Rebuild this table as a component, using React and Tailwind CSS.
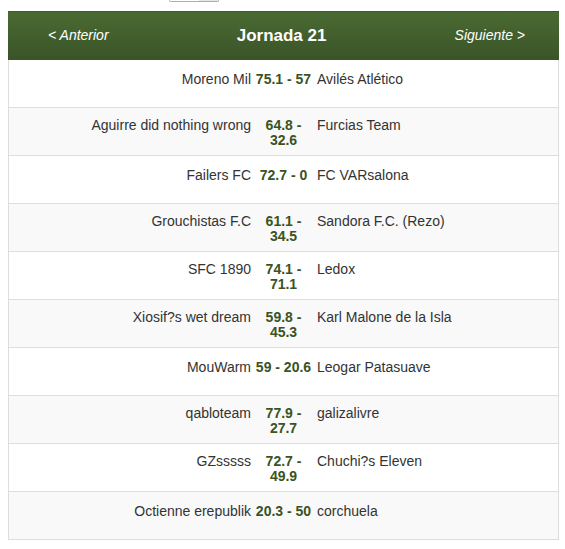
import React from "react";

const rows = [
  { h: "Moreno Mil", s: ["75.1 - 57"], a: "Avilés Atlético" },
  { h: "Aguirre did nothing wrong", s: ["64.8 -", "32.6"], a: "Furcias Team" },
  { h: "Failers FC", s: ["72.7 - 0"], a: "FC VARsalona" },
  { h: "Grouchistas F.C", s: ["61.1 -", "34.5"], a: "Sandora F.C. (Rezo)" },
  { h: "SFC 1890", s: ["74.1 -", "71.1"], a: "Ledox" },
  { h: "Xiosif?s wet dream", s: ["59.8 -", "45.3"], a: "Karl Malone de la Isla" },
  { h: "MouWarm", s: ["59 - 20.6"], a: "Leogar Patasuave" },
  { h: "qabloteam", s: ["77.9 -", "27.7"], a: "galizalivre" },
  { h: "GZsssss", s: ["72.7 -", "49.9"], a: "Chuchi?s Eleven" },
  { h: "Octienne erepublik", s: ["20.3 - 50"], a: "corchuela" },
];

export default function App() {
  return (
    <div className="w-[565px] h-[549px] bg-white font-['Liberation_Sans',Arial,sans-serif] text-[14px] text-[#333]">
      <div className="h-[11px]">
        <div className="ml-[169px] w-[50px] h-[2px] flex border-x border-b border-[#adadad] rounded-b-[3px] overflow-hidden">
          <div className="w-[29px] bg-white" />
          <div className="flex-1 bg-[#e6e6e6]" />
        </div>
      </div>
      <div className="ml-[8px] w-[551px]">
        <div className="h-[49px] flex items-center pl-[40px] pr-[34px] bg-linear-to-b from-[#4a6a32] to-[#3a5428] text-white border-t border-[#3d5a2a]">
          <span className="italic text-[14px] pb-[2px]">&lt; Anterior</span>
          <span className="flex-1 text-center font-bold text-[17px]">Jornada 21</span>
          <span className="italic text-[14px] pb-[2px]">Siguiente &gt;</span>
        </div>
        <div className="border-x border-[#ddd]">
          {rows.map((r, i) => (
            <div
              key={i}
              className={
                "h-[48px] flex items-start border-b border-[#ddd] leading-[15px] " +
                (r.s.length > 1 ? "pt-[10px] " : "pt-[12px] ") +
                (i % 2 === 1 ? "bg-[#f9f9f9]" : "bg-white")
              }
            >
              <div className="w-[242px] shrink-0 text-right whitespace-nowrap">{r.h}</div>
              <div className="ml-[4px] w-[57px] shrink-0 text-center font-bold text-[#3b5323] whitespace-nowrap">
                {r.s.map((l, j) => (
                  <div key={j}>{l}</div>
                ))}
              </div>
              <div className="ml-[5px] whitespace-nowrap">{r.a}</div>
            </div>
          ))}
        </div>
      </div>
    </div>
  );
}
